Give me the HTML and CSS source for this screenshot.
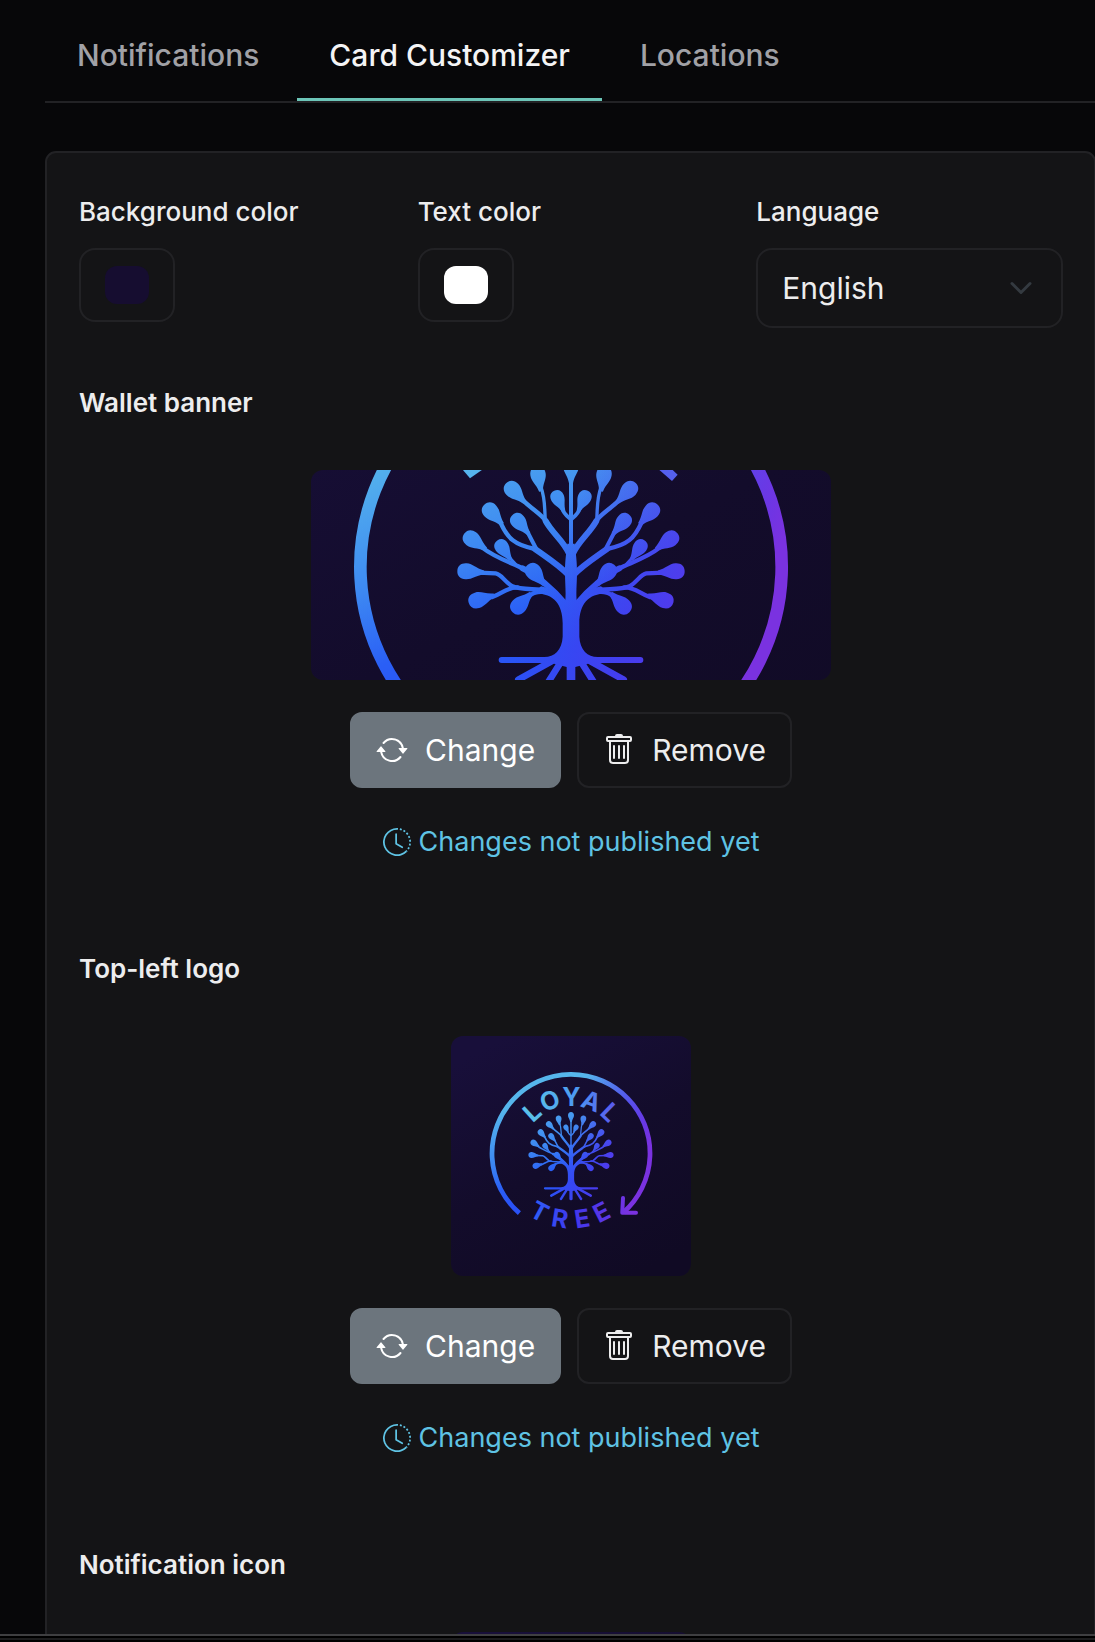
FILE: index.html
```
<!DOCTYPE html>
<html lang="en">
<head>
<meta charset="UTF-8">
<meta name="viewport" content="width=device-width, initial-scale=1">
<title>Card Customizer</title>
<link rel="stylesheet" href="styles.css">
</head>
<body>

<!-- shared icons and logo -->
<svg class="defs" width="0" height="0" aria-hidden="true">
	<defs>
		<symbol id="icon-repeat" viewBox="0 0 16 16">
			<path d="M11.534 7h3.932a.25.25 0 0 1 .192.41l-1.966 2.36a.25.25 0 0 1-.384 0l-1.966-2.36a.25.25 0 0 1 .192-.41zm-11 2h3.932a.25.25 0 0 0 .192-.41L2.692 6.23a.25.25 0 0 0-.384 0L.342 8.59A.25.25 0 0 0 .534 9z"/>
			<path d="M8 3c-1.552 0-2.94.707-3.857 1.818a.5.5 0 1 1-.771-.636A6.002 6.002 0 0 1 13.917 7H12.9A5.002 5.002 0 0 0 8 3zM3.1 9a5.002 5.002 0 0 0 8.757 2.182.5.5 0 1 1 .771.636A6.002 6.002 0 0 1 2.083 9H3.1z"/>
		</symbol>
		<symbol id="icon-trash" viewBox="0 0 16 16">
			<path d="M5.5 5.5A.5.5 0 0 1 6 6v6a.5.5 0 0 1-1 0V6a.5.5 0 0 1 .5-.5zm2.5 0a.5.5 0 0 1 .5.5v6a.5.5 0 0 1-1 0V6a.5.5 0 0 1 .5-.5zm3 .5a.5.5 0 0 0-1 0v6a.5.5 0 0 0 1 0V6z"/>
			<path fill-rule="evenodd" d="M14.5 3a1 1 0 0 1-1 1H13v9a2 2 0 0 1-2 2H5a2 2 0 0 1-2-2V4h-.5a1 1 0 0 1-1-1V2a1 1 0 0 1 1-1H6a1 1 0 0 1 1-1h2a1 1 0 0 1 1 1h3.5a1 1 0 0 1 1 1v1zM4.118 4 4 4.059V13a1 1 0 0 0 1 1h6a1 1 0 0 0 1-1V4.059L11.882 4H4.118zM2.5 3V2h11v1h-11z"/>
		</symbol>
		<symbol id="icon-clock" viewBox="0 0 16 16">
			<path d="M8.515 1.019A7 7 0 0 0 8 1V0a8 8 0 0 1 .589.022l-.074.997zm2.004.45a7.003 7.003 0 0 0-.985-.299l.219-.976c.383.086.76.2 1.126.342l-.36.933zm1.37.71a7.01 7.01 0 0 0-.439-.27l.493-.87a8.025 8.025 0 0 1 .979.654l-.615.789a6.996 6.996 0 0 0-.418-.302zm1.834 1.79a6.99 6.99 0 0 0-.653-.796l.724-.69c.27.285.52.59.747.91l-.818.576zm.744 1.352a7.08 7.08 0 0 0-.214-.468l.893-.45a7.976 7.976 0 0 1 .45 1.088l-.95.313a7.023 7.023 0 0 0-.179-.483zm.53 2.507a6.991 6.991 0 0 0-.1-1.025l.985-.17c.067.386.106.778.116 1.17l-1 .025zm-.131 1.538c.033-.17.06-.339.081-.51l.993.123a7.957 7.957 0 0 1-.23 1.155l-.964-.267c.046-.165.086-.332.12-.501zm-.952 2.379c.184-.29.346-.594.486-.908l.914.405c-.16.36-.345.706-.555 1.038l-.845-.535zm-.964 1.205c.122-.122.239-.248.35-.378l.758.653a8.073 8.073 0 0 1-.401.432l-.707-.707z"/>
			<path d="M8 1a7 7 0 1 0 4.95 11.95l.707.707A8.001 8.001 0 1 1 8 0v1z"/>
			<path d="M7.5 3a.5.5 0 0 1 .5.5v5.21l3.248 1.856a.5.5 0 0 1-.496.868l-3.5-2A.5.5 0 0 1 7 9V3.5a.5.5 0 0 1 .5-.5z"/>
		</symbol>

		<linearGradient id="logo-back" gradientUnits="userSpaceOnUse" x1="-500" y1="-939" x2="500" y2="981">
			<stop offset="0" stop-color="#180f3a"/>
			<stop offset=".5" stop-color="#130c2b"/>
			<stop offset="1" stop-color="#100a24"/>
		</linearGradient>
		<linearGradient id="logo-blue" gradientUnits="userSpaceOnUse" x1="-200" y1="-480" x2="60" y2="220">
			<stop offset="0" stop-color="#56b6ec"/>
			<stop offset=".5" stop-color="#3d88f2"/>
			<stop offset=".8" stop-color="#2a5ff6"/>
			<stop offset="1" stop-color="#2a52f6"/>
		</linearGradient>
		<linearGradient id="logo-purple" gradientUnits="userSpaceOnUse" x1="-60" y1="-60" x2="560" y2="140">
			<stop offset="0" stop-color="#5a20e6" stop-opacity="0"/>
			<stop offset=".5" stop-color="#5f2ae8" stop-opacity=".52"/>
			<stop offset="1" stop-color="#7a32e0"/>
		</linearGradient>
		<linearGradient id="loyal-fill" gradientUnits="userSpaceOnUse" x1="-300" y1="0" x2="330" y2="0">
			<stop offset="0" stop-color="#5ac0ea"/>
			<stop offset=".55" stop-color="#4c98f2"/>
			<stop offset="1" stop-color="#5a5cee"/>
		</linearGradient>
		<linearGradient id="tree-fill" gradientUnits="userSpaceOnUse" x1="-330" y1="0" x2="330" y2="0">
			<stop offset="0" stop-color="#2c62f8"/>
			<stop offset=".5" stop-color="#4038ee"/>
			<stop offset="1" stop-color="#6036e4"/>
		</linearGradient>

		<path id="leaf" d="M-26 0C-26 -15 -16 -24 0 -24C20 -24 28 -11 54 -6V6C28 11 20 24 0 24C-16 24 -26 15 -26 0Z"/>
		<g id="half-tree">
			<g fill="none" stroke="#fff" stroke-width="13" stroke-linecap="round">
				<path d="M-278 17L-226 19C-208 22 -200 44 -176 58C-150 70 -105 64 -76 70"/>
				<path d="M-236 90C-208 80 -190 60 -160 61"/>
				<path d="M-266 -58C-226 -26 -175 -12 -145 4"/>
				<path stroke-width="18" d="M-145 4C-105 24 -55 64 -18 110"/>
				<path stroke-width="9" d="M-184 -28L-166 -8"/>
				<path d="M-212 -134C-190 -86 -170 -66 -108 -54"/>
				<path stroke-width="18" d="M-108 -54C-75 -30 -35 -5 -8 24"/>
				<path stroke-width="12" d="M-132 -108L-104 -54"/>
				<path d="M-144 -200C-115 -172 -85 -155 -76 -138"/>
				<path stroke-width="18" d="M-76 -138C-55 -100 -22 -78 -6 -40"/>
				<path stroke-width="10" d="M-90 -240C-76 -200 -80 -170 -77 -142"/>
				<path stroke-width="11" d="M-27 -176C-20 -156 -8 -150 0 -142"/>
				<path d="M-92 36L-66 62"/>
				<path stroke-width="13" d="M-130 94C-120 78 -110 76 -80 74"/>
				<path stroke-width="20" d="M-60 284L-158 338"/>
				<path stroke-width="20" d="M-30 284L-80 364"/>
			</g>
			<g fill="#fff">
				<use href="#leaf" transform="translate(-315 13) rotate(4)"/>
				<use href="#leaf" transform="translate(-282 100) rotate(-16)"/>
				<use href="#leaf" transform="translate(-299 -85) rotate(36)"/>
				<use href="#leaf" transform="translate(-208 -61) rotate(55) scale(.88)"/>
				<use href="#leaf" transform="translate(-242 -168) rotate(48)"/>
				<use href="#leaf" transform="translate(-159 -138) rotate(50) scale(.94)"/>
				<use href="#leaf" transform="translate(-176 -233) rotate(46)"/>
				<use href="#leaf" transform="translate(-99 -278) rotate(80) scale(.96)"/>
				<use href="#leaf" transform="translate(-41 -209) rotate(65) scale(.85)"/>
				<use href="#leaf" transform="translate(-113 13) rotate(50)"/>
				<use href="#leaf" transform="translate(-157 117) rotate(-45)"/>
				<path d="M2 -70H-11C-14 -45 -18 -20 -18 15C-18 50 -14 80 -18 108C-35 84 -65 62 -90 58L-115 80C-55 76 -25 109 -25 169V209C-27 249 -50 270 -80 270H-208a9 9 0 0 0 0 18H-60L2 304Z"/>
			</g>
		</g>
		<mask id="logo-mask" maskUnits="userSpaceOnUse" x="-960" y="-939" width="1920" height="1920">
			<use href="#half-tree"/>
			<use href="#half-tree" transform="scale(-1 1)"/>
			<use href="#leaf" fill="#fff" transform="translate(0 -305) rotate(90)"/>
			<path fill="none" stroke="#fff" stroke-width="12" d="M0 -270V-60"/>
			<path fill="none" stroke="#fff" stroke-width="26" stroke-linecap="round" d="M0 280V362"/>
			<path fill="none" stroke="#fff" stroke-width="38" d="M-413 478A632 632 0 1 1 420 472"/>
			<path fill="none" stroke="#fff" stroke-width="32" stroke-linecap="round" stroke-linejoin="round" d="M416 357L410 475H520"/>
		</mask>
		<g id="logo-art">
			<rect x="-960" y="-939" width="1920" height="1920" fill="url(#logo-back)"/>
			<g mask="url(#logo-mask)">
				<rect x="-960" y="-939" width="1920" height="1920" fill="url(#logo-blue)"/>
				<rect x="-960" y="-939" width="1920" height="1920" fill="url(#logo-purple)"/>
			</g>
		</g>
	</defs>
</svg>

<div class="screen">
	<main class="content">
		<nav class="tabs">
			<a href="#notifications" class="tab">Notifications</a>
			<a href="#card" class="tab active">Card Customizer</a>
			<a href="#locations" class="tab">Locations</a>
		</nav>

		<div class="panel">
			<div class="fields">
				<div class="field">
					<label for="bgcolor">Background color</label>
					<input type="color" id="bgcolor" class="color" value="#160d30">
				</div>
				<div class="field">
					<label for="textcolor">Text color</label>
					<input type="color" id="textcolor" class="color" value="#ffffff">
				</div>
				<div class="field">
					<label for="language">Language</label>
					<div class="select-wrap">
						<select id="language">
							<option>English</option>
							<option>Spanish</option>
							<option>French</option>
						</select>
						<svg class="chevron" viewBox="0 0 16 16" aria-hidden="true"><path d="M2 5l6 6 6-6"/></svg>
					</div>
				</div>
			</div>

			<section class="upload">
				<h2>Wallet banner</h2>
				<svg class="preview banner" viewBox="-780 -291 1560 630" preserveAspectRatio="xMidYMid slice" role="img" aria-label="Wallet banner">
					<use href="#logo-art"/>
					<!-- feet of the first and last letters, cut by the top edge -->
					<path fill="#56b4ee" d="M-325 -292L-303 -266L-266 -292Z"/>
					<path fill="#5560ee" d="M264 -292L303 -258L320 -277L304 -292Z"/>
				</svg>
				<div class="actions">
					<button type="button" class="btn btn-change"><svg class="icon"><use href="#icon-repeat"/></svg>Change</button>
					<button type="button" class="btn btn-remove"><svg class="icon"><use href="#icon-trash"/></svg>Remove</button>
				</div>
				<p class="status"><svg class="icon-small"><use href="#icon-clock"/></svg>Changes not published yet</p>
			</section>

			<section class="upload">
				<h2>Top-left logo</h2>
				<svg class="preview logo" viewBox="-960 -939 1920 1920" role="img" aria-label="Loyal Tree">
					<use href="#logo-art"/>
					<text class="logo-text" fill="url(#loyal-fill)" x="-306 -217 -70 68 222" y="-242 -329 -378 -379 -318" rotate="-42 -21 0 21 44">LOYAL</text>
					<text class="logo-text" fill="url(#tree-fill)" x="-344 -165 39 221" y="496 580 601 560" rotate="28 9 -9 -27">TREE</text>
				</svg>
				<div class="actions">
					<button type="button" class="btn btn-change"><svg class="icon"><use href="#icon-repeat"/></svg>Change</button>
					<button type="button" class="btn btn-remove"><svg class="icon"><use href="#icon-trash"/></svg>Remove</button>
				</div>
				<p class="status"><svg class="icon-small"><use href="#icon-clock"/></svg>Changes not published yet</p>
			</section>

			<section class="upload">
				<h2>Notification icon</h2>
				<svg class="preview logo" viewBox="-960 -939 1920 1920" role="img" aria-label="Notification icon">
					<use href="#logo-art"/>
				</svg>
			</section>
		</div>
	</main>
	<div class="bottom-edge"></div>
</div>

</body>
</html>
```
FILE: styles.css
```
* {
	box-sizing: border-box;
}
body {
	margin: 0;
	background-color: #070709;
	color: #ededee;
	font-family: Inter, "Liberation Sans", sans-serif;
	font-size: 26px;
}
.defs {
	position: absolute;
}
.screen {
	display: flex;
	flex-direction: column;
	height: 100vh;
	overflow: hidden;
}
.content {
	flex: 1;
	min-height: 0;
	overflow: hidden;
	padding-left: 45px;
}

/* tabs */
.tabs {
	display: flex;
	gap: 6px;
	border-bottom: 2px solid #222225;
	padding-top: 9px;
}
.tab {
	padding: 26px 32px 24px;
	border-bottom: 2px solid transparent;
	color: #a1a1a6;
	font-size: 30px;
	font-weight: 500;
	line-height: 40px;
	text-decoration: none;
}
.tab.active {
	padding-bottom: 23px;
	border-bottom: 3px solid #6cc5b8;
	color: #f4f4f5;
}

/* panel */
.panel {
	margin: 48px -1px 0 0;
	padding: 39px 31px 39px 32px;
	background-color: #141416;
	border: 2px solid #222225;
	border-radius: 11px;
}
.fields {
	display: grid;
	grid-template-columns: repeat(3, 1fr);
	gap: 32px;
}
.field label {
	display: block;
	margin-bottom: 16px;
	font-weight: 500;
	line-height: 40px;
}
.color {
	display: block;
	appearance: none;
	width: 96px;
	height: 74px;
	padding: 16px 24px;
	background: none;
	border: 2px solid #222225;
	border-radius: 16px;
}
.color::-webkit-color-swatch-wrapper {
	padding: 0;
}
.color::-webkit-color-swatch {
	border: none;
	border-radius: 12px;
}
.select-wrap {
	display: grid;
	align-items: center;
}
.select-wrap > * {
	grid-area: 1 / 1;
}
select {
	appearance: none;
	width: 100%;
	height: 80px;
	padding: 0 24px;
	background: none;
	border: 2px solid #222225;
	border-radius: 16px;
	color: inherit;
	font-family: inherit;
	font-size: 30px;
}
.chevron {
	justify-self: end;
	width: 24px;
	height: 24px;
	margin-right: 30px;
	fill: none;
	stroke: #343a40;
	stroke-width: 2;
	stroke-linecap: round;
	stroke-linejoin: round;
	pointer-events: none;
}

/* image uploads */
.upload {
	display: flex;
	flex-direction: column;
	align-items: center;
	margin-top: 55px;
}
.upload + .upload {
	margin-top: 87px;
}
.upload h2 {
	align-self: stretch;
	margin: 0 0 47px;
	font-size: 26px;
	font-weight: 600;
	line-height: 40px;
}
.preview {
	display: block;
	border-radius: 12px;
}
.banner {
	width: 520px;
	height: 210px;
}
.logo {
	width: 240px;
	height: 240px;
}
.logo-text {
	font-size: 200px;
	font-weight: 700;
}
.actions {
	display: flex;
	gap: 16px;
	margin-top: 32px;
}
.btn {
	display: flex;
	align-items: center;
	gap: 17px;
	height: 76px;
	padding: 0 24px;
	border: 2px solid #222225;
	border-radius: 12px;
	background: none;
	color: #ededee;
	font-family: inherit;
	font-size: 30px;
}
.btn-change {
	background-color: #6c757d;
	border-color: #6c757d;
	color: #fff;
}
.icon {
	width: 32px;
	height: 32px;
	fill: currentColor;
}
.status {
	display: flex;
	align-items: center;
	gap: 8px;
	margin: 34px 0 0;
	color: #5fc3e4;
	font-size: 27px;
	line-height: 40px;
}
.icon-small {
	width: 28px;
	height: 28px;
	fill: currentColor;
}

/* window bottom edge */
.bottom-edge {
	height: 8px;
	background-color: #1c1c1d;
	border-top: 2px solid #3f3f41;
	border-bottom: 2px solid #000;
	box-shadow: inset 0 2px #000;
}
```
